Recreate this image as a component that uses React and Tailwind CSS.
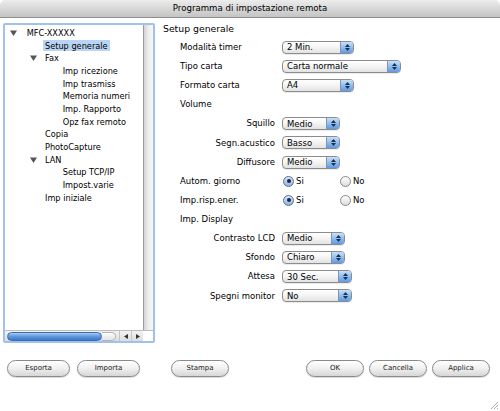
import React from 'react';

const font = { fontFamily: '"DejaVu Sans", "Liberation Sans", sans-serif' };

function Triangle() {
  return (
    <svg width="7" height="6" viewBox="0 0 7 6" className="block">
      <path d="M0 0.5 L7 0.5 L3.5 6 Z" fill="#555" />
    </svg>
  );
}

function Select({ value, w }) {
  return (
    <div className={`${w} h-[13px] flex rounded-[4px] border border-[#8c8c8c] bg-gradient-to-b from-white via-[#f4f4f4] to-[#e2e2e2] overflow-hidden shadow-[0_1px_0_rgba(0,0,0,0.08)]`}>
      <div className="flex-1 flex items-center pl-[4px] text-[8.5px] text-black leading-none">{value}</div>
      <div className="w-[13px] border-l border-[#7d95b8] bg-gradient-to-b from-[#c9e0f9] via-[#8fbdf0] to-[#5f9ae0] flex flex-col items-center justify-center gap-[1px]">
        <svg width="5" height="3" viewBox="0 0 5 3" className="block">
          <path d="M0 3 L5 3 L2.5 0 Z" fill="#1d2f4d" />
        </svg>
        <svg width="5" height="3" viewBox="0 0 5 3" className="block">
          <path d="M0 0 L5 0 L2.5 3 Z" fill="#1d2f4d" />
        </svg>
      </div>
    </div>
  );
}

function Radio({ checked, label, w }) {
  return (
    <div className={`${w} flex items-center gap-[2px] text-[8.5px]`}>
      <div
        className={`w-[11px] h-[11px] rounded-full border flex items-center justify-center ${
          checked
            ? 'border-[#5b6f8e] bg-gradient-to-b from-[#d6e6f8] to-[#8eb4e2]'
            : 'border-[#8a8a8a] bg-gradient-to-b from-white to-[#dcdcdc]'
        }`}
      >
        {checked && <div className="w-[4px] h-[4px] rounded-full bg-[#1b2a44]" />}
      </div>
      <span>{label}</span>
    </div>
  );
}

function Btn({ children, w, className = '' }) {
  return (
    <div className={`${w} ${className} h-[17px] rounded-full border border-[#8a8a8a] bg-gradient-to-b from-white via-[#f0f0f0] to-[#d6d6d6] flex items-center justify-center text-[7px] text-[#222] font-medium shadow-[0_1px_1px_rgba(0,0,0,0.15)]`}>
      {children}
    </div>
  );
}

const tree = [
  { label: 'MFC-XXXXX', level: 0, open: true },
  { label: 'Setup generale', level: 1, selected: true },
  { label: 'Fax', level: 1, open: true },
  { label: 'Imp ricezione', level: 2 },
  { label: 'Imp trasmiss', level: 2 },
  { label: 'Memoria numeri', level: 2 },
  { label: 'Imp. Rapporto', level: 2 },
  { label: 'Opz fax remoto', level: 2 },
  { label: 'Copia', level: 1 },
  { label: 'PhotoCapture', level: 1 },
  { label: 'LAN', level: 1, open: true },
  { label: 'Setup TCP/IP', level: 2 },
  { label: 'Impost.varie', level: 2 },
  { label: 'Imp iniziale', level: 1 },
];

function TreeRow({ item }) {
  if (item.open && item.level === 0) {
    return (
      <div className="h-[12.7px] flex items-center pl-[3px]">
        <div className="w-[18.7px] pl-[1.5px]"><Triangle /></div>
        <span>{item.label}</span>
      </div>
    );
  }
  if (item.open) {
    return (
      <div className="h-[12.7px] flex items-center pl-[23px]">
        <div className="w-[17px] pl-[1.5px]"><Triangle /></div>
        <span>{item.label}</span>
      </div>
    );
  }
  if (item.level === 1) {
    return (
      <div className="h-[12.7px] flex items-center pl-[37.7px]">
        <span className={`h-[11px] flex items-center px-[2.3px] ${item.selected ? 'bg-[#b9d5f6]' : ''}`}>{item.label}</span>
      </div>
    );
  }
  return (
    <div className="h-[12.7px] flex items-center pl-[57.7px]">
      <span>{item.label}</span>
    </div>
  );
}

function Row({ label, align = 'left', children }) {
  return (
    <div className="h-[19.13px] flex items-center">
      <div className={`w-[119px] shrink-0 text-[8.5px] ${align === 'right' ? 'text-right pr-[7px]' : 'pl-[17px]'}`}>
        {label}
      </div>
      {children}
    </div>
  );
}

export default function App() {
  return (
    <div className="w-[500px] h-[411px] bg-white flex flex-col relative overflow-hidden text-black" style={font}>
      {/* Title bar */}
      <div className="h-[18px] shrink-0 rounded-t-[5px] border-b border-[#8e8e8e] bg-gradient-to-b from-[#ededed] via-[#d8d8d8] to-[#c4c4c4] flex items-center justify-center text-[8.6px]">
        Programma di impostazione remota
      </div>

      <div className="flex pl-[3px] pt-[5px]">
        {/* Tree panel */}
        <div className="w-[152px] h-[320px] shrink-0 border-2 border-[#9fc1ec] rounded-[2px] flex flex-col bg-white">
          <div className="flex-1 flex min-h-0">
            <div className="flex-1 pt-[1.6px] text-[8.2px] leading-none">
              {tree.map((item) => (
                <TreeRow key={item.label} item={item} />
              ))}
            </div>
            <div className="w-[10px] border-l border-[#9a9a9a] bg-gradient-to-r from-[#d4d4d4] via-[#eeeeee] to-[#f7f7f7]" />
          </div>
          <div className="h-[11px] flex border-t border-[#bcbcbc]">
            <div className="flex-1 flex items-center pl-[2px] bg-gradient-to-b from-[#f2f2f2] to-[#dedede]">
              <div className="w-[95px] h-[9px] rounded-full border border-[#3d6aa8] bg-gradient-to-b from-[#a9cbf3] via-[#5f97dc] to-[#3f79c8]" />
              <div className="w-[14px] h-[9px] rounded-r-full border border-[#b4b4b4] border-l-0 bg-gradient-to-b from-white to-[#e2e2e2]" />
              <div className="ml-auto flex h-full">
                <div className="w-[12px] flex items-center justify-center border-l border-[#c4c4c4]">
                  <svg width="4" height="5" viewBox="0 0 4 5"><path d="M4 0 L4 5 L0 2.5 Z" fill="#333" /></svg>
                </div>
                <div className="w-[12px] flex items-center justify-center border-l border-[#c4c4c4]">
                  <svg width="4" height="5" viewBox="0 0 4 5"><path d="M0 0 L0 5 L4 2.5 Z" fill="#333" /></svg>
                </div>
              </div>
            </div>
            <div className="w-[10px] bg-white" />
          </div>
        </div>

        {/* Settings */}
        <div className="ml-[8px] flex-1">
          <div className="h-[12px] flex items-center text-[9.3px]">Setup generale</div>
          <div className="mt-[2.7px]">
            <Row label="Modalità timer"><Select value="2 Min." w="w-[72px]" /></Row>
            <Row label="Tipo carta"><Select value="Carta normale" w="w-[119px]" /></Row>
            <Row label="Formato carta"><Select value="A4" w="w-[72px]" /></Row>
            <Row label="Volume" />
            <Row label="Squillo" align="right"><Select value="Medio" w="w-[58px]" /></Row>
            <Row label="Segn.acustico" align="right"><Select value="Basso" w="w-[58px]" /></Row>
            <Row label="Diffusore" align="right"><Select value="Medio" w="w-[58px]" /></Row>
            <Row label="Autom. giorno">
              <div className="flex pl-[1px]">
                <Radio checked label="Si" w="w-[57px]" />
                <Radio label="No" w="w-[40px]" />
              </div>
            </Row>
            <Row label="Imp.risp.ener.">
              <div className="flex pl-[1px]">
                <Radio checked label="Si" w="w-[57px]" />
                <Radio label="No" w="w-[40px]" />
              </div>
            </Row>
            <Row label="Imp. Display" />
            <Row label="Contrasto LCD" align="right"><Select value="Medio" w="w-[63px]" /></Row>
            <Row label="Sfondo" align="right"><Select value="Chiaro" w="w-[63px]" /></Row>
            <Row label="Attesa" align="right"><Select value="30 Sec." w="w-[70px]" /></Row>
            <Row label="Spegni monitor" align="right"><Select value="No" w="w-[70px]" /></Row>
          </div>
        </div>
      </div>

      {/* Buttons */}
      <div className="mt-[17px] flex pl-[7px]">
        <Btn w="w-[63px]">Esporta</Btn>
        <Btn w="w-[63px]" className="ml-[7px]">Importa</Btn>
        <Btn w="w-[58px]" className="ml-[31px]">Stampa</Btn>
        <Btn w="w-[58px]" className="ml-[77px]">OK</Btn>
        <Btn w="w-[58px]" className="ml-[5px]">Cancella</Btn>
        <Btn w="w-[58px]" className="ml-[5px]">Applica</Btn>
      </div>

      {/* Resize grip */}
      <svg width="10" height="10" viewBox="0 0 10 10" className="absolute right-[1px] bottom-[1px]">
        <path d="M9 2 L2 9 M9 5 L5 9 M9 8 L8 9" stroke="#9a9a9a" strokeWidth="0.8" />
      </svg>
    </div>
  );
}
